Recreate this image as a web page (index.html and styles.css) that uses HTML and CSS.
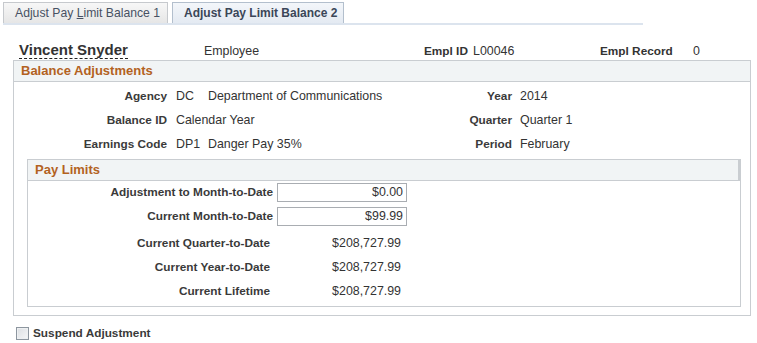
FILE: index.html
```html
<!DOCTYPE html>
<html>
<head>
<meta charset="utf-8">
<link rel="stylesheet" href="styles.css">
</head>
<body>
<div class="page">
  <div class="tabs">
    <div class="tab">Adjust Pay <u>L</u>imit Balance 1</div>
    <div class="tab active">Adjust Pay Limit Balance 2</div>
  </div>

  <div class="hdr">
    <div class="name"><span class="name-text">Vincent Snyder</span></div>
    <div class="emp">Employee</div>
    <div class="hlabel">Empl ID</div>
    <div class="hval id">L00046</div>
    <div class="hlabel rec">Empl Record</div>
    <div class="hval">0</div>
  </div>

  <div class="box">
    <div class="box-head">Balance Adjustments</div>
    <div class="rows">
      <div class="row">
        <div class="lbl">Agency</div>
        <div class="val"><span class="code">DC</span>Department of Communications</div>
        <div class="rlbl">Year</div>
        <div class="val">2014</div>
      </div>
      <div class="row">
        <div class="lbl">Balance ID</div>
        <div class="val">Calendar Year</div>
        <div class="rlbl">Quarter</div>
        <div class="val">Quarter 1</div>
      </div>
      <div class="row">
        <div class="lbl">Earnings Code</div>
        <div class="val"><span class="code">DP1</span>Danger Pay 35%</div>
        <div class="rlbl">Period</div>
        <div class="val">February</div>
      </div>
    </div>

    <div class="sub">
      <div class="box-head sub-head">Pay Limits</div>
      <div class="prow">
        <div class="plbl">Adjustment to Month-to-Date</div>
        <div class="inp">$0.00</div>
      </div>
      <div class="prow">
        <div class="plbl">Current Month-to-Date</div>
        <div class="inp">$99.99</div>
      </div>
      <div class="trows">
        <div class="trow">
          <div class="tlbl">Current Quarter-to-Date</div>
          <div class="tval">$208,727.99</div>
        </div>
        <div class="trow">
          <div class="tlbl">Current Year-to-Date</div>
          <div class="tval">$208,727.99</div>
        </div>
        <div class="trow">
          <div class="tlbl">Current Lifetime</div>
          <div class="tval">$208,727.99</div>
        </div>
      </div>
    </div>
  </div>

  <div class="check-row">
    <span class="cb"></span>
    <span class="cb-label">Suspend Adjustment</span>
  </div>
</div>
</body>
</html>
```

FILE: styles.css
```css
* { box-sizing: border-box; }
html, body { margin: 0; padding: 0; background: #fff; }
body {
  font-family: "Liberation Sans", Arial, sans-serif;
  font-size: 12px;
  color: #333;
}
.page { width: 757px; height: 343px; overflow: hidden; }

.tabs {
  display: flex;
  gap: 4px;
  margin: 2px 0 0 3px;
  width: 640px;
  border-bottom: 2px solid #dce4ee;
}
.tab {
  height: 21px;
  line-height: 20px;
  padding: 0 0 0 11px;
  width: 165px;
  white-space: nowrap;
  overflow: hidden;
  border: 1px solid #c6c9cd;
  border-bottom: none;
  background: linear-gradient(#f7f7f7, #e6e6e6);
  color: #475163;
  font-size: 12.2px;
}
.tab u { text-decoration: underline; }
.tab.active {
  width: 172px;
  padding-left: 11px;
  font-weight: bold;
  font-size: 12px;
  color: #3b4658;
  background: linear-gradient(#f3f6fa, #e4eaf2);
  border-color: #b3bfcd;
}

.hdr {
  display: grid;
  grid-template-columns: 185px 220px 49px 127px 93px 1fr;
  align-items: end;
  margin-top: 17px;
  padding-left: 19px;
  height: 18px;
}
.name { line-height: 17px; }
.name-text {
  display: inline-block;
  font-size: 15px;
  font-weight: bold;
  color: #333;
  border-bottom: 1px dashed #222;
  line-height: 16px;
}
.emp, .hval { font-size: 12.4px; line-height: 16px; padding-bottom: 1px; }
.hlabel { font-weight: bold; font-size: 11.8px; line-height: 16px; padding-bottom: 1px; }

.box {
  margin: 0 0 0 13px;
  width: 738px;
  border: 1px solid #c9cdd1;
  padding-bottom: 8px;
}
.box-head {
  height: 21px;
  line-height: 20px;
  background: #f1f4f5;
  border-bottom: 1px solid #c9cdd1;
  padding-left: 7px;
  font-size: 13px;
  font-weight: bold;
  color: #b3621f;
}
.rows { padding-top: 2px; }
.row {
  display: grid;
  grid-template-columns: 162px 264px 80px 1fr;
  height: 24px;
  align-items: center;
}
.lbl, .rlbl {
  text-align: right;
  font-weight: bold;
  font-size: 11.8px;
  color: #3a3a3a;
}
.lbl { padding-right: 9px; }
.rlbl { padding-right: 8px; }
.val { font-size: 12.4px; white-space: nowrap; }
.code { display: inline-block; width: 32px; }

.sub {
  margin: 3px 9px 0 13px;
  width: 714px;
  border: 1px solid #c9cdd1;
  padding-bottom: 3px;
}
.sub-head { height: 21px; border-right: 2px solid #c9cdd1; }
.prow {
  display: grid;
  grid-template-columns: 249px 130px;
  height: 24px;
  padding-top: 2px;
}
.plbl {
  text-align: right;
  padding-right: 4px;
  font-weight: bold;
  font-size: 11.8px;
  color: #3a3a3a;
  line-height: 19px;
}
.inp {
  height: 19px;
  border: 1px solid #a9adb2;
  text-align: right;
  padding-right: 3px;
  line-height: 17px;
  font-size: 12.4px;
}
.trows { padding-top: 2px; }
.trow {
  display: grid;
  grid-template-columns: 249px 124px;
  height: 24px;
  align-items: center;
}
.tlbl {
  text-align: right;
  padding-right: 7px;
  font-weight: bold;
  font-size: 11.8px;
  color: #3a3a3a;
}
.tval { text-align: right; font-size: 12.4px; }

.check-row {
  display: flex;
  align-items: center;
  margin-top: 9px;
  padding-left: 16px;
  height: 16px;
}
.cb {
  width: 13px;
  height: 13px;
  border: 1px solid #8d969f;
  background: linear-gradient(135deg, #dcdfe3, #f6f7f8);
  box-shadow: inset 0 0 0 1px #eef0f2;
}
.cb-label {
  margin-left: 4px;
  font-weight: bold;
  font-size: 11.8px;
  color: #3a3a3a;
}
```
